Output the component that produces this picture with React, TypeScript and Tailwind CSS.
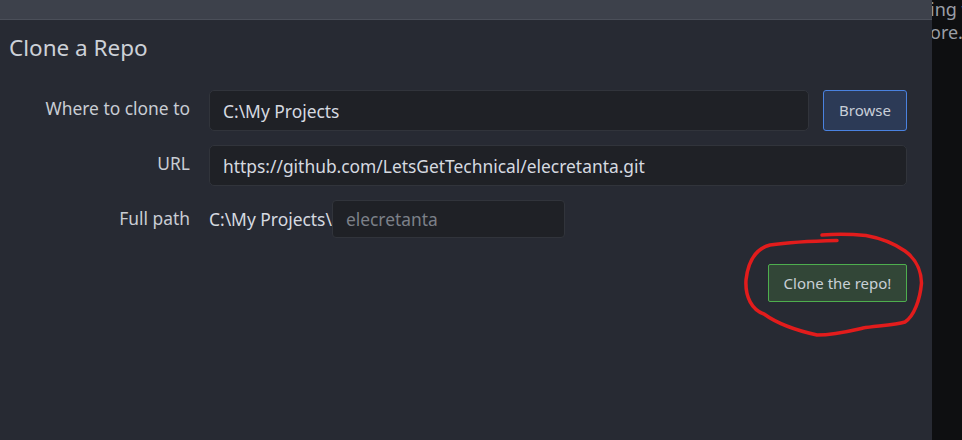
import { useState } from "react"

const font = { fontFamily: '"Noto Sans", "Open Sans", sans-serif' }

function Field({ label, children }: { label: string; children: React.ReactNode }) {
  return (
    <div className="flex items-start gap-[19px]">
      <label className="w-[190px] shrink-0 pt-[5px] text-right text-[17.4px] text-[#c9cdd4]">{label}</label>
      <div className="flex flex-1 items-center">{children}</div>
    </div>
  )
}

function Scribble() {
  // hand drawn red ring around the submit button
  return (
    <svg className="pointer-events-none absolute left-0 top-0" width="962" height="440">
      <path
        d="M837 240.5 C815 241 790 242 770 245 C755 249 748 262 746 280 C745 297 752 310 764 314 C775 322 790 329 817 335 C835 335 850 331 863 328 C875 326 895 325 905 322 C914 316 920 300 921.5 283 C921 270 917 260 905 251 C895 244 880 238 866 235.5 C850 234 835 234 822 235"
        fill="none"
        stroke="#e21c1c"
        strokeWidth="3.5"
        strokeLinecap="round"
      />
    </svg>
  )
}

export default function App() {
  const [where, setWhere] = useState("C:\\My Projects")
  const [url, setUrl] = useState("https://github.com/LetsGetTechnical/elecretanta.git")
  const [folder, setFolder] = useState("")

  return (
    <div className="relative flex h-[440px] w-[962px] overflow-hidden bg-[#0e0f11]" style={font}>
      <div className="flex w-[932px] shrink-0 flex-col bg-[#272a33]">
        <div className="h-[20px] shrink-0 border-b border-[#4b4f59] bg-[#3d414b]" />
        <h2 className="pl-[9px] pt-[13px] text-[22.5px] leading-[30px] text-[#cdd1d8]">Clone a Repo</h2>

        <div className="mt-[27px] flex flex-col gap-[14px] pr-[25px]">
          <Field label="Where to clone to">
            <input
              value={where}
              onChange={(e) => setWhere(e.target.value)}
              className="h-[41px] flex-1 rounded-[5px] border border-[#31343b] bg-[#1f2126] pl-[13px] text-[17.4px] text-[#d6dae0] outline-none"
            />
            <button className="ml-[14px] h-[41px] w-[84px] rounded-[3px] border border-[#4a82e0] bg-[#2c3a56] text-[15px] text-[#c8ced8]">
              Browse
            </button>
          </Field>
          <Field label="URL">
            <input
              value={url}
              onChange={(e) => setUrl(e.target.value)}
              className="h-[41px] flex-1 rounded-[5px] border border-[#31343b] bg-[#1f2126] pl-[13px] text-[17.4px] text-[#d6dae0] outline-none"
            />
          </Field>
          <Field label="Full path">
            <span className="text-[17.4px] text-[#d6dae0]">C:\My Projects\</span>
            <input
              value={folder}
              onChange={(e) => setFolder(e.target.value)}
              placeholder="elecretanta"
              className="h-[38px] w-[233px] rounded-[4px] border border-[#31343b] bg-[#1f2126] pl-[13px] text-[17.4px] text-[#d6dae0] outline-none placeholder:text-[#7c8088]"
            />
          </Field>
        </div>

        <div className="mt-[26px] flex justify-end pr-[25px]">
          <button className="h-[38px] w-[139px] rounded-[2px] border border-[#4eae4e] bg-[#324637] text-[15px] text-[#c9d0d6]">
            Clone the repo!
          </button>
        </div>
      </div>

      <div className="flex-1 overflow-hidden">
        <p className="-ml-[2px] mt-[-4px] whitespace-nowrap text-[18px] leading-[26px] text-[#9a9ea6]">ing w</p>
        <p className="-ml-[2px] whitespace-nowrap text-[18px] leading-[20px] text-[#9a9ea6]">ore.</p>
      </div>

      <Scribble />
    </div>
  )
}
